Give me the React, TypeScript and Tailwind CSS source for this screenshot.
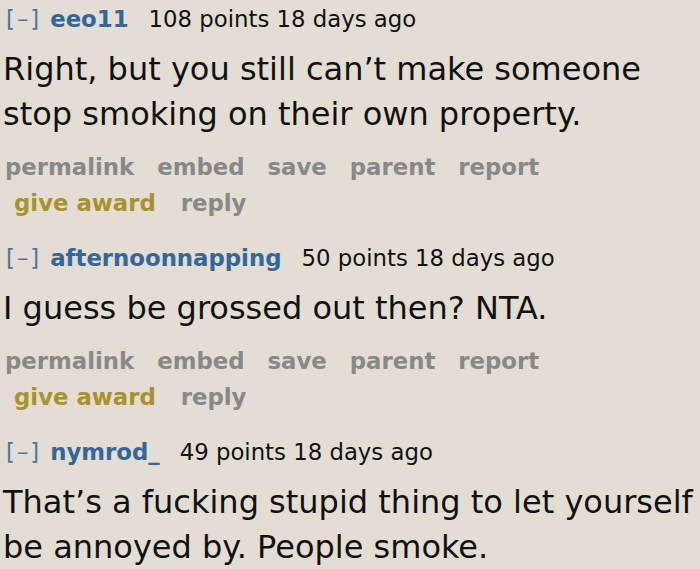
import React from "react";

type Comment = {
  user: string;
  points: string;
  body: string[];
};

const comments: Comment[] = [
  {
    user: "eeo11",
    points: "108 points 18 days ago",
    body: ["Right, but you still can\u2019t make someone", "stop smoking on their own property."],
  },
  {
    user: "afternoonnapping",
    points: "50 points 18 days ago",
    body: ["I guess be grossed out then? NTA."],
  },
  {
    user: "nymrod_",
    points: "49 points 18 days ago",
    body: ["That\u2019s a fucking stupid thing to let yourself", "be annoyed by. People smoke."],
  },
];

function Buttons() {
  return (
    <div className="mt-[12px] font-bold text-[22.8px] leading-[36px] text-[#888888]">
      <div className="flex whitespace-nowrap gap-x-[23px] pl-[5px]">
        <span>permalink</span>
        <span>embed</span>
        <span>save</span>
        <span>parent</span>
        <span>report</span>
      </div>
      <div className="flex whitespace-nowrap gap-x-[25px] pl-[14px]">
        <span className="text-[#a8922e]">give award</span>
        <span>reply</span>
      </div>
    </div>
  );
}

function CommentBlock({ c, last }: { c: Comment; last: boolean }) {
  return (
    <div className={last ? "pt-[5px]" : "pt-[5px] pb-[18px]"}>
      <div className="flex items-baseline whitespace-nowrap text-[22.8px] leading-[28px] pl-[6px]">
        <span className="text-[#4a76a4] tracking-[2px]">[&ndash;]</span>
        <span className="ml-[9px] font-bold text-[#336699]">{c.user}</span>
        <span className="ml-[20px] text-[#111111]">{c.points}</span>
      </div>
      <div className="mt-[14px] text-[32px] leading-[45px] text-[#111111] pl-[3px] whitespace-nowrap">
        {c.body.map((line, i) => (
          <div key={i}>{line}</div>
        ))}
      </div>
      {!last && <Buttons />}
    </div>
  );
}

export default function App() {
  return (
    <div
      className="w-[700px] h-[569px] overflow-hidden bg-[#e3ddd4]"
      style={{ fontFamily: '"DejaVu Sans", Verdana, sans-serif' }}
    >
      {comments.map((c, i) => (
        <CommentBlock key={i} c={c} last={i === comments.length - 1} />
      ))}
    </div>
  );
}
